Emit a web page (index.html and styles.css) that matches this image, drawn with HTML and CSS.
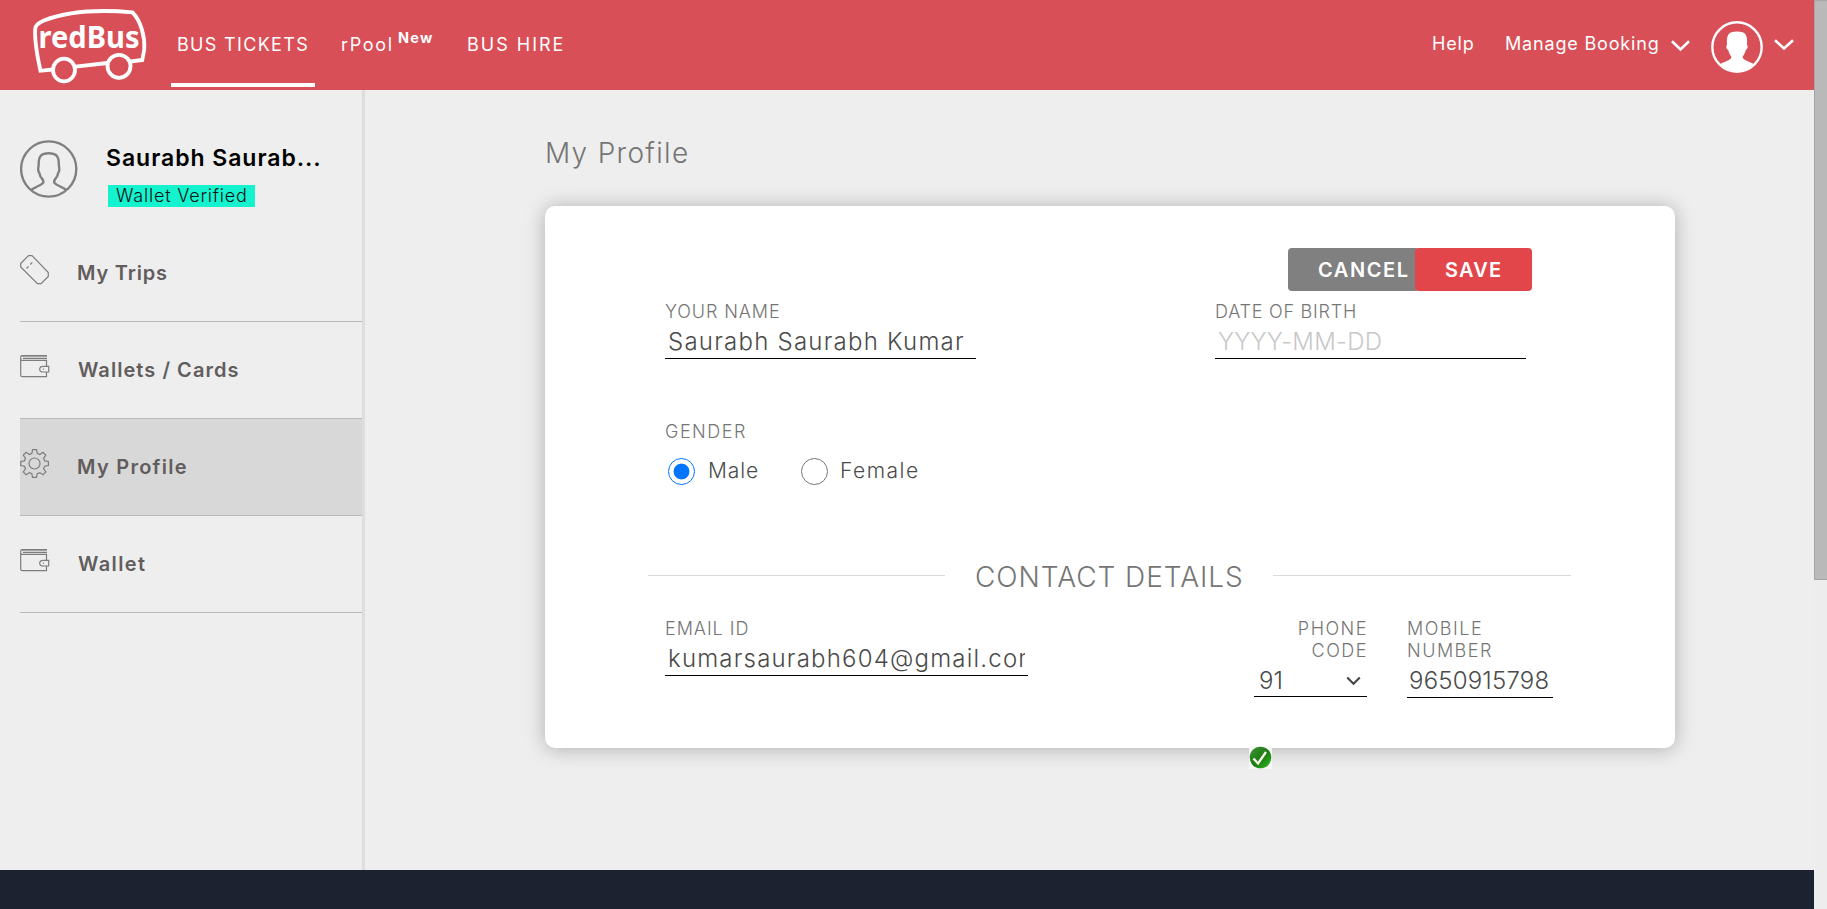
FILE: index.html
```html
<!DOCTYPE html>
<html lang="en">
<head>
<meta charset="utf-8">
<title>My Profile - redBus</title>
<link rel="stylesheet" href="styles.css">
</head>
<body>
<div class="viewport">
  <div class="page">
    <header class="header">
      <svg class="logo" width="116" height="90" viewBox="32 0 116 90" fill="none" stroke="#fff" stroke-width="3.800">
        <path d="M52.500 69.500L40.500 70.800C37 55 34.500 42 35.200 29C35.500 25 38 23.500 44 20.500C68 11 100 9.500 132.500 12.300C141 21 145 37 144.300 49L142.300 60L130.500 61.500M75.500 66.700L107.500 63"/>
        <ellipse cx="64" cy="70" rx="11" ry="11.300"/>
        <ellipse cx="119" cy="66.300" rx="11.500" ry="11.500"/>
        <text class="logo-text" x="38.500" y="48" textLength="101" lengthAdjust="spacingAndGlyphs">redBus</text>
      </svg>
      <nav class="nav">
        <a class="nav-item nav-tickets">BUS TICKETS</a>
        <a class="nav-item nav-pool">rPool<span class="nav-new">New</span></a>
        <a class="nav-item nav-hire">BUS HIRE</a>
      </nav>
      <div class="account">
        <a class="help">Help</a>
        <a class="manage">Manage Booking</a>
        <svg class="chev" width="19" height="12" viewBox="0 0 19 12"><path d="M1 1.300L9.500 9.500L18 1.300"/></svg>
        <svg class="avatar" width="52" height="52" viewBox="0 0 52 52">
          <circle cx="26" cy="26" r="24.700" fill="none" stroke="#fff" stroke-width="2.400"/>
          <path fill="#fff" d="M9.500 43C14 40 19.500 39.500 20.500 36C19 33.500 17.500 31.500 17.300 29C15 28 15 25 16 23.500C15.500 15 16.500 10.500 26 10.500C35.500 10.500 36.500 15 36 23.500C37 25 37 28 34.700 29C34.500 31.500 33 33.500 31.500 36C32.500 39.500 38 40 42.500 43C38 48 32 50.500 26 50.500S14 48 9.500 43Z"/>
        </svg>
        <svg class="chev chev-user" width="20" height="12" viewBox="0 0 20 12"><path d="M1 1.300L10 9.500L19 1.300"/></svg>
      </div>
    </header>

    <div class="content">
      <aside class="sidebar">
        <div class="user">
          <svg width="58" height="58" viewBox="0 0 58 58" fill="none" stroke="#808080" stroke-width="2.400">
            <circle cx="28.700" cy="29" r="27.600"/>
            <path d="M11 50C15 47 20.500 45.500 23 43C24.500 41 22 39 20.500 36.500C19.500 34.500 19.800 33 18.500 31.500C17.500 29.500 18.700 27 18.700 24C18.500 16 21.500 13.200 28.700 13.200S39 16 38.800 24C38.800 27 40 29.500 39 31.500C37.700 33 38 34.500 37 36.500C35.500 39 33 41 34.500 43C37 45.500 42.500 47 46.500 50"/>
          </svg>
          <div class="user-info">
            <div class="user-name">Saurabh Saurab...</div>
            <span class="badge">Wallet Verified</span>
          </div>
        </div>
        <div class="menu">
          <a class="menu-item">
            <svg width="30" height="30" viewBox="0 0 30 30"><path d="M.700 8.500L8.500.700H12L28.300 17.500V21.500L21 28.700H17.500L.700 12Z"/><path d="M6.500 13.500L14 5.500" stroke-dasharray="3 2.500"/></svg>
            <span class="trips">My Trips</span>
          </a>
          <a class="menu-item">
            <svg width="30" height="30" viewBox="0 0 30 30"><path fill="#a0a3a0" stroke="none" d="M1.500 3H27V5H1.500Z"/><path d="M27 3.500H2.500Q.700 3.500.700 5.300V23Q.700 24.700 2.300 24.700H26.500V20M26.500 14.500V8.300H2Q.700 8.300.700 6M3 6.300H27"/><path d="M28.700 14.300H23.300C18.500 14.300 18.500 20 23.300 20H28.700Z"/><path d="M23 17.100h1"/></svg>
            <span class="cards">Wallets / Cards</span>
          </a>
          <a class="menu-item active">
            <svg width="30" height="30" viewBox="0 0 30 30"><circle cx="14.500" cy="14.500" r="5.500"/><path d="M12.500.700H16.500L17.200 4.400L19.800 5.500L23 3.300L25.800 6.100L23.600 9.300L24.700 11.900L28.400 12.500V16.500L24.700 17.200L23.600 19.800L25.800 23L23 25.800L19.800 23.600L17.200 24.700L16.500 28.400H12.500L11.900 24.700L9.300 23.600L6.100 25.800L3.300 23L5.500 19.800L4.400 17.200L.700 16.500V12.500L4.400 11.900L5.500 9.300L3.300 6.100L6.100 3.300L9.300 5.500L11.900 4.400Z"/></svg>
            <span class="profile">My Profile</span>
          </a>
          <a class="menu-item">
            <svg width="30" height="30" viewBox="0 0 30 30"><path fill="#a0a3a0" stroke="none" d="M1.500 3H27V5H1.500Z"/><path d="M27 3.500H2.500Q.700 3.500.700 5.300V23Q.700 24.700 2.300 24.700H26.500V20M26.500 14.500V8.300H2Q.700 8.300.700 6M3 6.300H27"/><path d="M28.700 14.300H23.300C18.500 14.300 18.500 20 23.300 20H28.700Z"/><path d="M23 17.100h1"/></svg>
            <span class="wallet">Wallet</span>
          </a>
        </div>
      </aside>

      <main class="main">
        <h1 class="title">My Profile</h1>
        <section class="card">
          <div class="actions">
            <button class="btn cancel">CANCEL</button>
            <button class="btn save">SAVE</button>
          </div>
          <div class="row">
            <div class="field name-field">
              <div class="label l-name">YOUR NAME</div>
              <div class="value v-name">Saurabh Saurabh Kumar</div>
            </div>
            <div class="field dob-field">
              <div class="label l-dob">DATE OF BIRTH</div>
              <div class="value placeholder">YYYY-MM-DD</div>
            </div>
          </div>
          <div class="gender">
            <div class="label l-gender">GENDER</div>
            <div class="options">
              <span class="radio checked"></span><span class="option male">Male</span>
              <span class="radio"></span><span class="option female">Female</span>
            </div>
          </div>
          <div class="divider">
            <span class="line line-left"></span>
            <h2 class="subtitle">CONTACT DETAILS</h2>
            <span class="line line-right"></span>
          </div>
          <div class="row contact">
            <div class="field email-field">
              <div class="label l-email">EMAIL ID</div>
              <input class="value v-email" type="text" value="kumarsaurabh604@gmail.com">
            </div>
            <div class="field code-field">
              <div class="label l-code">PHONE<br>CODE</div>
              <div class="value v-code">91<svg width="15" height="10" viewBox="0 0 15 10"><path d="M1.200 1.500L7.500 7.800L13.800 1.500"/></svg></div>
            </div>
            <div class="field mobile-field">
              <div class="label l-mobile">MOBILE<br>NUMBER</div>
              <div class="value v-mobile">9650915798</div>
            </div>
          </div>
          <svg class="verified" width="23" height="23" viewBox="0 0 23 23">
            <defs><linearGradient id="green" x1="0" y1="0" x2="1" y2="1"><stop offset="0" stop-color="#3c9434"/><stop offset=".55" stop-color="#1d7a12"/><stop offset="1" stop-color="#35c222"/></linearGradient></defs>
            <rect width="23" height="23" fill="#f8f8f8"/>
            <circle cx="11.500" cy="11.500" r="10.800" fill="url(#green)"/>
            <path d="M4.500 12.500L9 17.500L17 6" fill="none" stroke="#f3fbe9" stroke-width="2.300"/>
          </svg>
        </section>
      </main>
    </div>
    <footer class="footer"></footer>
  </div>
  <div class="scrollbar"><div class="thumb"></div></div>
</div>
</body>
</html>
```

FILE: styles.css
```css
* { box-sizing: border-box; }
body { margin: 0; font-family: Inter, sans-serif; background: #eee; }
.viewport { display: flex; height: 909px; overflow: hidden; }
.page { width: 1814px; display: flex; flex-direction: column; }
.scrollbar { width: 13px; background: #ededed; }
.thumb { height: 580px; background: #b9b9b9; border: 1px solid #a5a5a5; border-right: 0; }

.header { height: 90px; flex: none; display: flex; padding: 0 20px 0 32px; background: #d84f57; color: #fff; font-size: 18px; }
.logo-text { font: 700 30px "Noto Sans", sans-serif; fill: #fff; stroke: none; }
.nav { display: flex; margin-left: 23px; line-height: 90px; }
.nav-item { height: 87px; white-space: nowrap; }
.nav-tickets { width: 144px; padding-left: 6px; border-bottom: 4px solid #fff; letter-spacing: 1.33px; }
.nav-pool { display: flex; width: 126px; margin-left: 26px; letter-spacing: 1.7px; }
.nav-new { margin-left: 4px; font-size: 14.5px; font-weight: 700; letter-spacing: 1.3px; line-height: 76px; }
.nav-hire { letter-spacing: 2px; }
.account { display: flex; margin-left: auto; line-height: 88px; }
.help { width: 73px; letter-spacing: .85px; }
.manage { width: 166px; letter-spacing: .83px; white-space: nowrap; }
.chev { margin-top: 40px; fill: none; stroke: #fff; stroke-width: 2.600; }
.chev-user { margin: 39px 0 0 11px; }
.avatar { margin: 21px 0 0 21px; }

.content { display: flex; height: 780px; flex: none; }
.sidebar { width: 365px; padding-left: 20px; border-right: 3px solid #dedede; }
.user { display: flex; height: 135px; padding-top: 50px; }
.user-info { margin: 3px 0 0 27px; }
.user-name { padding-left: 1px; font-size: 23px; font-weight: 600; line-height: 31px; letter-spacing: .96px; color: #000; white-space: nowrap; }
.badge { display: block; width: 147px; height: 22px; margin: 11px 0 0 3px; padding-left: 8px; background: #14f2ce; color: #111; font-size: 18px; font-weight: 300; line-height: 21px; letter-spacing: .79px; white-space: nowrap; }
.menu-item { display: flex; height: 97px; border-bottom: 1px solid #bcb8b8; color: #625d5d; font-size: 20px; font-weight: 600; line-height: 96px; }
.menu-item svg { flex: none; margin: 30px 27px 0 0; fill: none; stroke: #7d7d7d; stroke-width: 1.200; }
.active { background: #d8d8d8; }
.trips { letter-spacing: .81px; }
.cards { padding-left: 1px; letter-spacing: 1.05px; }
.profile { letter-spacing: 1.27px; }
.wallet { padding-left: 1px; letter-spacing: 1.4px; }

.main { padding: 45px 0 0 180px; }
.title { margin: 0 0 35px; color: #757575; font-size: 28px; font-weight: 300; line-height: 36px; letter-spacing: 1.3px; }
.card { position: relative; width: 1130px; height: 542px; padding-top: 42px; border-radius: 10px; background: #fff; box-shadow: 0 1px 20px rgba(0, 0, 0, .27); }
.actions { display: flex; justify-content: flex-end; padding-right: 143px; }
.btn { height: 43px; padding: 2px 0 0 30px; border: 0; border-radius: 4px; color: #fff; font: 600 20px/41px Inter, sans-serif; text-align: left; }
.cancel { width: 131px; margin-right: -4px; background: #808080; letter-spacing: 1.6px; }
.save { width: 117px; background: #e3464a; letter-spacing: 1.2px; }
.row { display: flex; margin-top: 10px; padding-left: 120px; }
.label { color: #757575; font-size: 18px; font-weight: 300; line-height: 22px; white-space: nowrap; }
.value { height: 36px; padding-left: 3px; border-bottom: 1px solid #000; color: #4a4a4a; font-size: 24px; font-weight: 300; line-height: 38px; white-space: nowrap; }
.name-field { width: 311px; }
.dob-field { width: 311px; margin-left: 239px; }
.l-name { letter-spacing: .9px; }
.v-name { letter-spacing: 1.24px; }
.l-dob { letter-spacing: .76px; }
.placeholder { color: #c8c8c8; letter-spacing: .28px; }
.gender { margin-top: 62px; padding-left: 120px; }
.l-gender { letter-spacing: 1.5px; }
.options { display: flex; height: 27px; margin-top: 15px; padding-left: 3px; }
.radio { width: 27px; height: 27px; border: 1px solid #767676; border-radius: 50%; }
.checked { border-color: #0075ff; background: radial-gradient(circle, #0075ff 7.5px, #fff 8.300px); }
.option { color: #4a4a4a; font-size: 21px; font-weight: 300; line-height: 26px; }
.male { width: 93px; margin-left: 13px; letter-spacing: .85px; }
.female { margin-left: 12px; letter-spacing: 1.5px; }
.divider { display: flex; height: 36px; margin-top: 74px; padding-left: 103px; }
.line { height: 1px; margin-top: 16px; background: #dadada; }
.line-left { width: 297px; }
.line-right { width: 298px; }
.subtitle { width: 328px; margin: 0; padding-left: 30px; color: #757575; font-size: 28px; font-weight: 300; line-height: 37px; letter-spacing: .96px; white-space: nowrap; }
.contact { margin-top: 23px; align-items: flex-start; }
.email-field { width: 363px; }
.l-email { letter-spacing: .96px; }
.v-email { display: block; width: 363px; height: 36px; margin: 0; padding: 2px 3px 0; border-width: 0 0 1px; border-radius: 0; background: none; outline: 0; font-family: Inter, sans-serif; line-height: 33px; letter-spacing: 1.2px; }
.code-field { width: 113px; margin-left: 226px; }
.l-code { margin-right: -1px; text-align: right; letter-spacing: 1.5px; }
.v-code { display: flex; justify-content: space-between; height: 35px; padding: 0 6px 0 5px; line-height: 38px; }
.v-code svg { margin-top: 14px; fill: none; stroke: #444; stroke-width: 2; }
.mobile-field { width: 146px; margin-left: 40px; }
.l-mobile { letter-spacing: 1.5px; }
.v-mobile { height: 36px; padding-left: 2px; letter-spacing: .2px; }
.verified { position: absolute; left: 704px; top: 540px; }

.footer { flex: none; height: 39px; background: #1c2230; }
```
